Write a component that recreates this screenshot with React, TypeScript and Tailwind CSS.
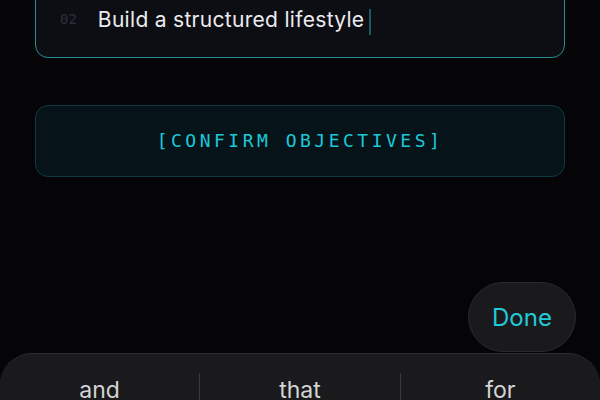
import React from 'react';

const mono = { fontFamily: '"DejaVu Sans Mono", "Liberation Mono", monospace' };
const sans = { fontFamily: 'Inter, "Noto Sans", sans-serif' };

const suggestions = ['and', 'that', 'for'];

export default function App() {
  return (
    <div className="relative h-[400px] w-[600px] overflow-hidden bg-[#050507]" style={sans}>
      <div className="px-[35px]">
        {/* objective input, scrolled partly out of view */}
        <div className="mt-[-40px] flex h-[98px] items-end rounded-[13px] border border-[#2a8c94] bg-[#0d0e13] px-[24px] pb-[23px]">
          <span className="mb-[4px] mr-[21px] text-[14px] text-[#2c2f3e]" style={mono}>02</span>
          <span className="text-[21px] leading-[28px] tracking-[0.3px] text-[#ececef]">Build a structured lifestyle</span>
          <span className="ml-[5px] mb-[-1px] h-[26px] w-[2px] bg-[#1b5a62]" />
        </div>

        <button className="mt-[47px] flex h-[72px] w-full items-center justify-center rounded-[13px] border border-[#0f3a42] bg-[#06141a] pb-[1px] text-[18px] font-medium tracking-[3.5px] text-[#1cc8d8]" style={mono}>
          [CONFIRM OBJECTIVES]
        </button>
      </div>

      <div className="mt-[105px] flex justify-end pr-[24px]">
        <button className="flex h-[70px] w-[108px] items-center justify-center rounded-full border border-[#2a2a2d] bg-[#1a1a1c] pt-[2px] text-[24px] text-[#22c9d9]">
          Done
        </button>
      </div>

      {/* keyboard suggestion bar */}
      <div className="mt-[1px] h-[60px] rounded-t-[32px] border-t border-[#2e2e31] bg-[#1a1a1c]">
        <div className="flex pt-[19px]">
          {suggestions.map((s, i) => (
            <div
              key={s}
              className={`flex h-[40px] flex-1 justify-center ${i > 0 ? 'border-l border-[#3a3a3d]' : ''}`}
            >
              <span className="text-[23px] text-[#d4d4d6]">{s}</span>
            </div>
          ))}
        </div>
      </div>
    </div>
  );
}
